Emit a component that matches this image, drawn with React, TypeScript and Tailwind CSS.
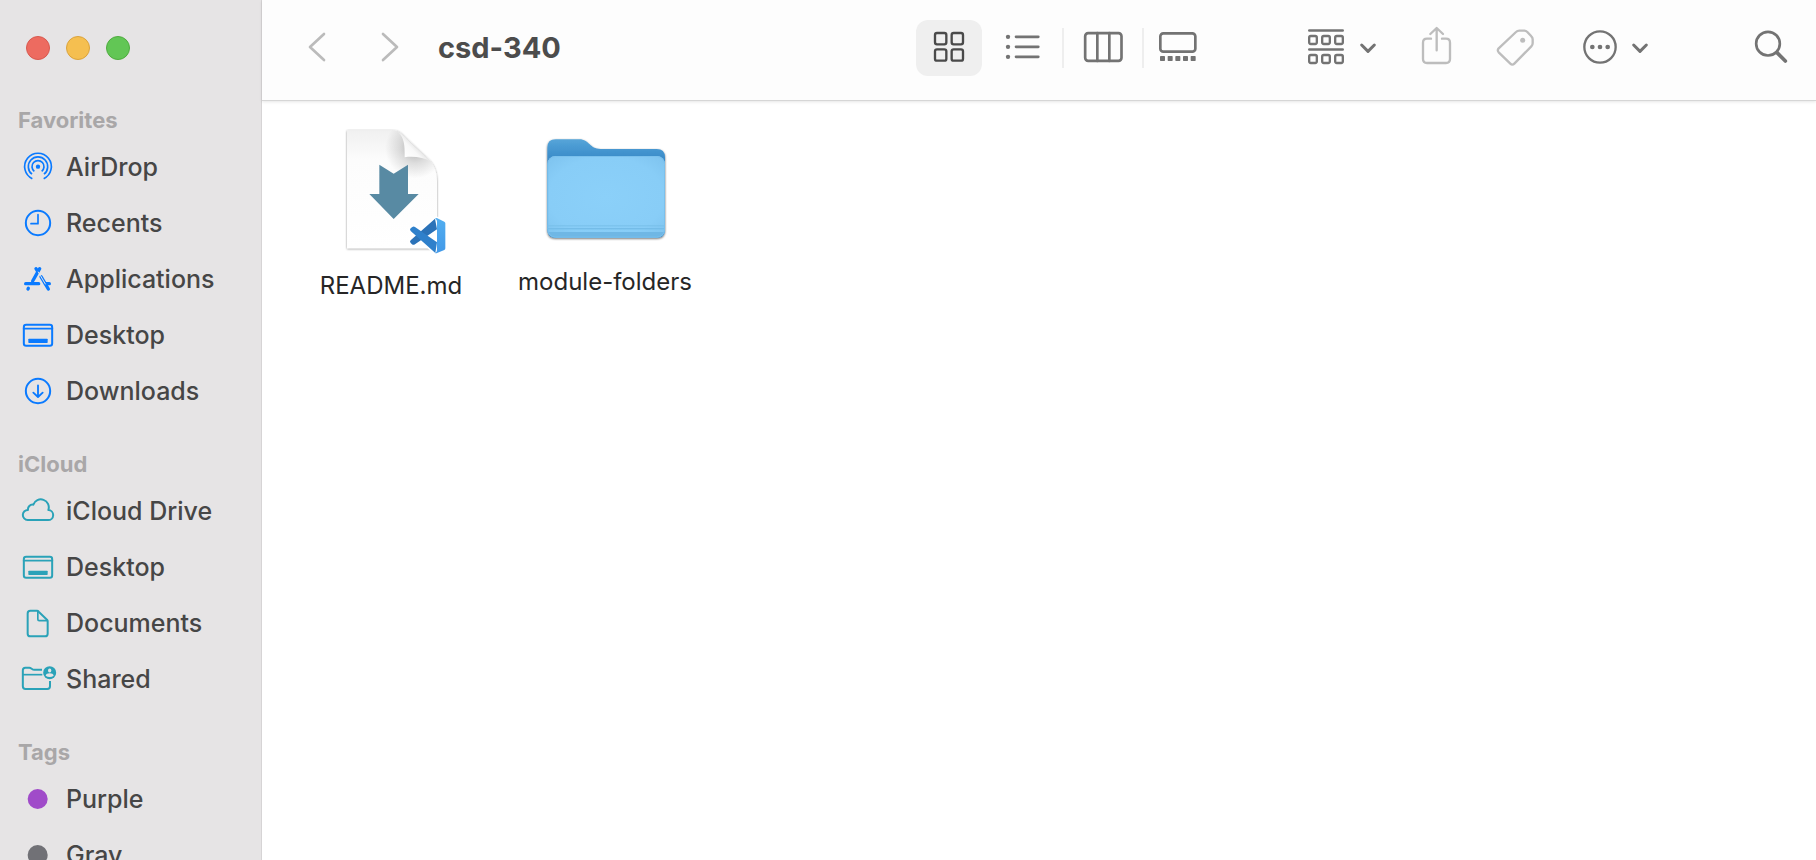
import type { ReactNode } from "react";

type IconProps = { width: string; units: number; children: ReactNode; stroke?: number };

function BarIcon({ width, units, stroke = 7, children }: IconProps) {
  return (
    <svg
      className={`${width} h-10 shrink-0 overflow-visible`}
      viewBox={`0 0 ${units} 120`}
      fill="none"
      stroke="currentColor"
      strokeWidth={stroke}
      strokeLinecap="round"
      strokeLinejoin="round"
      aria-hidden="true"
    >
      {children}
    </svg>
  );
}

function SideIcon({ children }: { children: ReactNode }) {
  return (
    <svg
      className="h-8 w-10 shrink-0 overflow-visible"
      viewBox="0 0 120 96"
      fill="none"
      stroke="currentColor"
      strokeWidth={6}
      strokeLinecap="round"
      strokeLinejoin="round"
      aria-hidden="true"
    >
      {children}
    </svg>
  );
}

const airdrop = (
  <SideIcon>
    <g strokeWidth={5} strokeLinecap="butt">
      <path d="M43 83A40 40 0 1 1 77 83" />
      <path d="M42 69.500A29 29 0 1 1 78 69.500" />
      <path d="M49 61A18 18 0 1 1 71 61" />
    </g>
    <circle cx="60" cy="47" r="6.500" fill="currentColor" stroke="none" />
  </SideIcon>
);
const clock = (
  <SideIcon>
    <circle cx="60" cy="48" r="36.500" />
    <path d="M60 23V50H39" strokeWidth={5} />
  </SideIcon>
);
const apps = (
  <SideIcon>
    <g strokeWidth={10}>
      <path d="M65 17L44 54" />
      <path d="M54 17L59 25" />
      <path d="M69 41L91 78" />
      <path d="M23 62H62" />
      <path d="M82 62H94" />
      <path d="M30 78L31 76" />
    </g>
    <path d="M61 27L82 63" stroke="#e6e4e5" strokeWidth={3} />
  </SideIcon>
);
const desktop = (
  <SideIcon>
    <rect x="17.500" y="17.500" width="85" height="63" rx="7" />
    <path d="M17 29H103" strokeWidth={5} />
    <rect x="31" y="59" width="58" height="13" rx="2" fill="currentColor" stroke="none" />
  </SideIcon>
);
const download = (
  <SideIcon>
    <circle cx="60" cy="48" r="36.500" />
    <path d="M60 31V65M46 53L60 66L74 53" strokeWidth={5.5} />
  </SideIcon>
);
const cloud = (
  <SideIcon>
    <path d="M29 75H90A15 15 0 0 0 91 45A23.500 23.500 0 0 0 46 29A14 14 0 0 0 30 45A15 15 0 0 0 29 75Z" />
  </SideIcon>
);
const doc = (
  <SideIcon>
    <path d="M37 11.500H57Q60 11.500 62 14L87 38Q89 40 89 43V80Q89 88 81 88H37Q29 88 29 80V19.500Q29 11.500 37 11.500Z" />
    <path d="M59.500 13V37Q59.500 41 63.500 41H88" strokeWidth={5} />
  </SideIcon>
);
const shared = (
  <SideIcon>
    <path
      d="M72 20.500H49C42 20.500 40 14.500 34 14.500H22Q14.500 14.500 14.500 22V70Q14.500 78 22.500 78H88Q96 78 96 70V54"
      strokeLinecap="butt"
    />
    <path d="M15 35H73" strokeLinecap="butt" strokeWidth={5} />
    <circle cx="95" cy="29" r="19.500" fill="currentColor" stroke="none" />
    <g fill="#e6e4e5" stroke="none">
      <ellipse cx="95" cy="22.500" rx="5" ry="6" />
      <path d="M83 38Q85 31 95 31Q105 31 107 38Q102 42 95 42Q88 42 83 38Z" />
    </g>
  </SideIcon>
);
const dot = (
  <SideIcon>
    <circle cx="59" cy="48" r="30" fill="currentColor" stroke="none" />
  </SideIcon>
);

type Item = { label: string; icon: ReactNode; tint: string };

const sections: { title: string; items: Item[] }[] = [
  {
    title: "Favorites",
    items: [
      { label: "AirDrop", icon: airdrop, tint: "text-[#0a7aff]" },
      { label: "Recents", icon: clock, tint: "text-[#0a7aff]" },
      { label: "Applications", icon: apps, tint: "text-[#0a7aff]" },
      { label: "Desktop", icon: desktop, tint: "text-[#0a7aff]" },
      { label: "Downloads", icon: download, tint: "text-[#0a7aff]" },
    ],
  },
  {
    title: "iCloud",
    items: [
      { label: "iCloud Drive", icon: cloud, tint: "text-[#2aa2b8]" },
      { label: "Desktop", icon: desktop, tint: "text-[#2aa2b8]" },
      { label: "Documents", icon: doc, tint: "text-[#2aa2b8]" },
      { label: "Shared", icon: shared, tint: "text-[#2aa2b8]" },
    ],
  },
  {
    title: "Tags",
    items: [
      { label: "Purple", icon: dot, tint: "text-[#a04bc9]" },
      { label: "Gray", icon: dot, tint: "text-[#717176]" },
    ],
  },
];

function Sidebar() {
  return (
    <aside className="flex w-[262px] shrink-0 flex-col overflow-hidden border-r border-[#d6d4d5] bg-[#e6e4e5]">
      <div className="flex shrink-0 gap-4 px-[26px] pt-9 pb-[15px]">
        <button type="button" aria-label="Close" className="size-6 rounded-full border border-[#d8594f] bg-[#ed6b60]" />
        <button type="button" aria-label="Minimize" className="size-6 rounded-full border border-[#dba33c] bg-[#f5bf50]" />
        <button type="button" aria-label="Zoom" className="size-6 rounded-full border border-[#4fac3f] bg-[#62c655]" />
      </div>
      <nav aria-label="Sidebar">
        {sections.map((section) => (
          <section key={section.title}>
            <h2 className="px-[18px] pt-[31px] pb-[5px] text-[22px] leading-7 font-bold text-[#a9a7a8]">
              {section.title}
            </h2>
            <ul>
              {section.items.map((item) => (
                <li key={item.label}>
                  <a href="#" className="flex h-14 items-center gap-2 pl-[18px]">
                    <span className={item.tint}>{item.icon}</span>
                    <span className="text-[25px] leading-8 font-[450] whitespace-nowrap text-[#464646]">{item.label}</span>
                  </a>
                </li>
              ))}
            </ul>
          </section>
        ))}
      </nav>
    </aside>
  );
}

function Caret() {
  return (
    <BarIcon width="w-4" units={48} stroke={9}>
      <path d="M5 51L24 70L43 51" />
    </BarIcon>
  );
}

function Toolbar() {
  return (
    <header className="z-10 flex h-[101px] shrink-0 items-center border-b border-[#d6d6d6] bg-[#fdfdfd] pr-[26px] pb-1 pl-[45px] text-[#737373] shadow-[0_1px_3px_rgba(0,0,0,0.10)]">
      <button type="button" aria-label="Back" className="flex text-[#bbbbbb]">
        <BarIcon width="w-5" units={60} stroke={8}>
          <path d="M51 18L9 57L51 96" />
        </BarIcon>
      </button>
      <button type="button" aria-label="Forward" className="ml-[53px] flex text-[#bbbbbb]">
        <BarIcon width="w-5" units={60} stroke={8}>
          <path d="M9 18L51 57L9 96" />
        </BarIcon>
      </button>
      <h1 className="ml-[38px] flex-1 text-[29px] leading-[38px] font-bold whitespace-nowrap text-[#4c4c4c]">csd-340</h1>

      <div className="flex items-center" role="group" aria-label="View">
        <button
          type="button"
          aria-label="Icons"
          aria-pressed="true"
          className="flex h-14 w-[66px] items-center justify-center rounded-xl bg-[#efefef] text-[#4a4a4a]"
        >
          <BarIcon width="w-8" units={96}>
            <rect x="6" y="15" width="34" height="34" rx="6" />
            <rect x="56" y="15" width="34" height="34" rx="6" />
            <rect x="6" y="64" width="34" height="34" rx="6" />
            <rect x="56" y="64" width="34" height="34" rx="6" />
          </BarIcon>
        </button>
        <button type="button" aria-label="List" className="flex w-20 justify-center">
          <BarIcon width="w-9" units={108} stroke={8}>
            <path d="M36 26.500H103M36 56.500H103M36 86.500H103" />
            <g fill="currentColor" stroke="none">
              <circle cx="12" cy="26.500" r="6.500" />
              <circle cx="12" cy="56.500" r="6.500" />
              <circle cx="12" cy="86.500" r="6.500" />
            </g>
          </BarIcon>
        </button>
        <div className="h-10 w-0.5 bg-[#eeeeee]" />
        <button type="button" aria-label="Columns" className="flex w-[78px] justify-center">
          <BarIcon width="w-10" units={120} stroke={8}>
            <rect x="6.500" y="15.500" width="109" height="83" rx="9" />
            <path d="M43 15V99M79 15V99" />
          </BarIcon>
        </button>
        <div className="h-10 w-0.5 bg-[#eeeeee]" />
        <button type="button" aria-label="Gallery" className="flex w-[68px] justify-center">
          <BarIcon width="w-10" units={120} stroke={8}>
            <rect x="7" y="16" width="105" height="55" rx="9" />
            <g fill="currentColor" stroke="none">
              <rect x="6" y="84" width="15" height="15" rx="2" />
              <rect x="29" y="84" width="15" height="15" rx="2" />
              <rect x="52" y="84" width="15" height="15" rx="2" />
              <rect x="75" y="84" width="15" height="15" rx="2" />
              <rect x="98" y="84" width="15" height="15" rx="2" />
            </g>
          </BarIcon>
        </button>
      </div>

      <button type="button" aria-label="Group" className="ml-24 flex gap-4">
        <BarIcon width="w-9" units={108} stroke={8}>
          <path d="M4 7.500H104M4 64.500H104" />
          <g strokeWidth={7}>
            <rect x="3.500" y="24" width="23" height="24" rx="5" />
            <rect x="42.500" y="24" width="23" height="24" rx="5" />
            <rect x="81.500" y="24" width="23" height="24" rx="5" />
            <rect x="3.500" y="81" width="23" height="24" rx="5" />
            <rect x="42.500" y="81" width="23" height="24" rx="5" />
            <rect x="81.500" y="81" width="23" height="24" rx="5" />
          </g>
        </BarIcon>
        <Caret />
      </button>
      <button type="button" aria-label="Share" className="ml-[45px] flex text-[#bdbdbd]">
        <BarIcon width="w-[30px]" units={90}>
          <path d="M30 32H18Q6 32 6 44V93Q6 105 18 105H75Q87 105 87 93V44Q87 32 75 32H63" />
          <path d="M47 1V67M28 18L47 0L66 18" />
        </BarIcon>
      </button>
      <button type="button" aria-label="Tags" className="ml-[45px] flex text-[#bdbdbd]">
        <BarIcon width="w-[38px]" units={114}>
          <path d="M70 8H85Q90 8 94 12L106 25Q110 29 110 34V46Q110 51 106 55L55 107Q49 113 43 107L8 73Q3 67 8 61L60 12Q64 8 70 8Z" />
          <circle cx="80" cy="37" r="7.500" fill="currentColor" stroke="none" />
        </BarIcon>
      </button>
      <button type="button" aria-label="More" className="ml-12 flex gap-[14px]">
        <BarIcon width="w-9" units={108}>
          <circle cx="54" cy="57" r="47" />
          <g fill="currentColor" stroke="none">
            <circle cx="31" cy="57" r="7" />
            <circle cx="54" cy="57" r="7" />
            <circle cx="77" cy="57" r="7" />
          </g>
        </BarIcon>
        <Caret />
      </button>
      <button type="button" aria-label="Search" className="ml-[106px] flex">
        <BarIcon width="w-9" units={108} stroke={8}>
          <circle cx="42" cy="47" r="35.500" />
          <path d="M69 74L94 99" strokeWidth={11} />
        </BarIcon>
      </button>
    </header>
  );
}

function MarkdownFile() {
  return (
    <svg className="h-[132px] w-32" viewBox="81 57 384 396" aria-hidden="true">
      <defs>
        <linearGradient id="page" x1="0" y1="0" x2="0" y2="1">
          <stop offset="0" stopColor="#f0f0f0" />
          <stop offset="0.25" stopColor="#fcfcfc" />
          <stop offset="1" stopColor="#ffffff" />
        </linearGradient>
        <radialGradient id="pageShade" gradientUnits="userSpaceOnUse" cx="345" cy="115" r="90">
          <stop offset="0" stopColor="#000" stopOpacity="0.3" />
          <stop offset="0.5" stopColor="#000" stopOpacity="0.12" />
          <stop offset="1" stopColor="#000" stopOpacity="0" />
        </radialGradient>
        <linearGradient id="curl" gradientUnits="userSpaceOnUse" x1="314" y1="142" x2="350" y2="106">
          <stop offset="0" stopColor="#ffffff" />
          <stop offset="0.65" stopColor="#f8f8f8" />
          <stop offset="1" stopColor="#e2e2e2" />
        </linearGradient>
        <linearGradient id="panel" x1="0" y1="0" x2="0" y2="1">
          <stop offset="0" stopColor="#52aef0" />
          <stop offset="1" stopColor="#4299e8" />
        </linearGradient>
        <filter id="pageShadow" x="-10%" y="-10%" width="120%" height="120%">
          <feDropShadow dx="0" dy="2" stdDeviation="2.5" floodOpacity="0.45" />
        </filter>
      </defs>
      <path
        d="M141 61H276C296 61 304 70 314 80L388 150C405 168 411 190 411 215V415H141Z"
        fill="url(#page)"
        filter="url(#pageShadow)"
      />
      <path d="M141 61H276C296 61 304 70 314 80L388 150C405 168 411 190 411 215V415H141Z" fill="url(#pageShade)" />
      <path d="M294 66C312 82 315 105 314 142C340 138 372 142 394 156L314 80Q304 69 294 66Z" fill="url(#curl)" />
      <path d="M238 164L281 191L324 164V252H356L281 327L208 252H238Z" fill="#588aa3" />
      <path
        d="M408 325L436 338V418L408 430L372 396L344 406L330 396V390L352 377L330 362V357L344 349L370 360Z"
        fill="#fff"
        stroke="#fff"
        strokeWidth="12"
        strokeLinejoin="round"
      />
      <path d="M405 326L411 358L345 403Q340 406 336 403L332 399Q328 395 332 391Z" fill="#2b72b8" />
      <path d="M332 363Q328 359 332 355L337 351Q341 348 345 351L411 397L406 429Z" fill="#2f80cb" />
      <path
        d="M405 326Q409 323 412 325L433 335Q436 337 436 340V415Q436 418 433 420L411 429Q408 431 405 429Q411 428 411 420V334Q411 328 405 326Z"
        fill="url(#panel)"
      />
    </svg>
  );
}

function Folder() {
  return (
    <svg className="size-32" viewBox="123 57 384 384" aria-hidden="true">
      <defs>
        <linearGradient id="back" gradientUnits="userSpaceOnUse" x1="0" y1="87" x2="0" y2="160">
          <stop offset="0" stopColor="#57a5d9" />
          <stop offset="0.45" stopColor="#4596d0" />
          <stop offset="1" stopColor="#3585c4" />
        </linearGradient>
        <radialGradient id="front" cx="0.5" cy="0.5" r="0.75">
          <stop offset="0" stopColor="#8bd0f9" />
          <stop offset="0.65" stopColor="#88cdf7" />
          <stop offset="1" stopColor="#7bc0ec" />
        </radialGradient>
        <clipPath id="frontShape">
          <rect x="142" y="138" width="353" height="245" rx="24" />
        </clipPath>
        <filter id="folderShadow" x="-10%" y="-10%" width="120%" height="120%">
          <feDropShadow dx="0" dy="3" stdDeviation="3" floodOpacity="0.6" />
        </filter>
      </defs>
      <path
        d="M142 113Q142 88 167 88H238C268 88 268 117 302 117H470Q495 117 495 142V359Q495 383 471 383H166Q142 383 142 359Z"
        fill="url(#back)"
        filter="url(#folderShadow)"
      />
      <g clipPath="url(#frontShape)">
        <rect x="142" y="138" width="353" height="245" fill="url(#front)" />
        <rect x="142" y="346" width="353" height="3" fill="#78bfe9" />
        <rect x="142" y="354" width="353" height="4" fill="#74bce8" />
        <rect x="142" y="366" width="353" height="17" fill="#6fb7e5" />
      </g>
      <rect x="143.500" y="139.500" width="350" height="242" rx="23" fill="none" stroke="#7ac0ec" strokeWidth="3" />
    </svg>
  );
}

function FileTile({ name, children }: { name: string; children: ReactNode }) {
  return (
    <a href="#" className="flex w-[214px] flex-col items-center gap-[9px]">
      {children}
      <span className="text-[24px] leading-8 whitespace-nowrap text-[#262626]">{name}</span>
    </a>
  );
}

export default function App() {
  return (
    <div className="flex h-screen overflow-hidden bg-white font-['Inter',sans-serif]">
      <Sidebar />
      <div className="flex min-w-0 flex-1 flex-col">
        <Toolbar />
        <main className="flex flex-1 flex-wrap content-start items-start px-[22px] pt-7">
          <FileTile name="README.md">
            <MarkdownFile />
          </FileTile>
          <FileTile name="module-folders">
            <Folder />
          </FileTile>
        </main>
      </div>
    </div>
  );
}
